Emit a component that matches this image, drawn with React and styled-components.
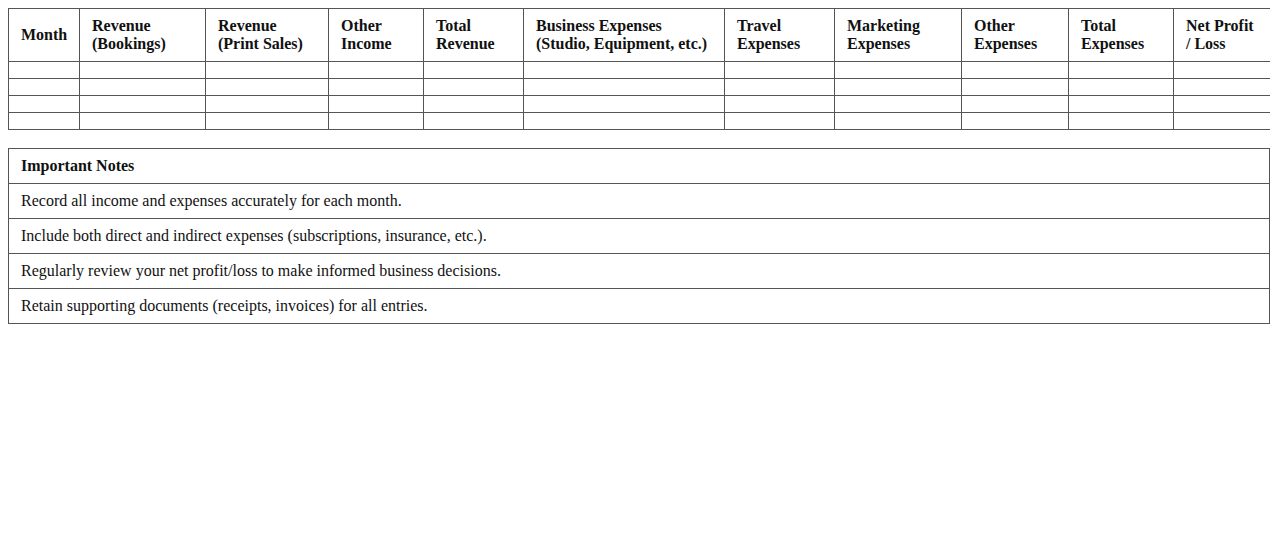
import React from 'react';
import styled, { createGlobalStyle } from 'styled-components';

const GlobalStyle = createGlobalStyle`
  body {
    margin: 8px;
    background: #fff;
    color: #111;
    font-family: "Liberation Serif", "Times New Roman", serif;
    font-size: 16px;
  }
`;

const Table = styled.table`
  width: 100%;
  border-collapse: collapse;
  table-layout: fixed;
  margin-top: ${props => props.$gap || 0}px;
`;

const HeadCell = styled.th`
  box-sizing: border-box;
  width: ${props => (props.$w ? `${props.$w}px` : 'auto')};
  border: 1px solid #555;
  padding: 8px 12px;
  text-align: left;
  vertical-align: middle;
  font-weight: bold;
`;

const Cell = styled.td`
  border: 1px solid #555;
  padding: 8px 12px;
  text-align: left;
`;

const columns = [
  { label: ['Month'], w: 71 },
  { label: ['Revenue', '(Bookings)'], w: 126 },
  { label: ['Revenue', '(Print Sales)'], w: 123 },
  { label: ['Other', 'Income'], w: 95 },
  { label: ['Total', 'Revenue'], w: 100 },
  { label: ['Business Expenses', '(Studio, Equipment, etc.)'], w: 201 },
  { label: ['Travel', 'Expenses'], w: 110 },
  { label: ['Marketing', 'Expenses'], w: 127 },
  { label: ['Other', 'Expenses'], w: 107 },
  { label: ['Total', 'Expenses'], w: 105 },
  { label: ['Net Profit', '/ Loss'], w: 97 },
];

const notes = [
  'Record all income and expenses accurately for each month.',
  'Include both direct and indirect expenses (subscriptions, insurance, etc.).',
  'Regularly review your net profit/loss to make informed business decisions.',
  'Retain supporting documents (receipts, invoices) for all entries.',
];

const App = () => {
  return (
    <>
      <GlobalStyle />
      <Table>
        <thead>
          <tr>
            {columns.map((col, i) => (
              <HeadCell key={i} $w={col.w}>
                {col.label.map((line, j) => (
                  <React.Fragment key={j}>
                    {j > 0 && <br />}
                    {line}
                  </React.Fragment>
                ))}
              </HeadCell>
            ))}
          </tr>
        </thead>
        <tbody>
          {[0, 1, 2, 3].map(r => (
            <tr key={r}>
              {columns.map((_, i) => <Cell key={i} />)}
            </tr>
          ))}
        </tbody>
      </Table>

      <Table $gap={18}>
        <thead>
          <tr>
            <HeadCell>Important Notes</HeadCell>
          </tr>
        </thead>
        <tbody>
          {notes.map((note, i) => (
            <tr key={i}>
              <Cell>{note}</Cell>
            </tr>
          ))}
        </tbody>
      </Table>
    </>
  );
};

export default App;
